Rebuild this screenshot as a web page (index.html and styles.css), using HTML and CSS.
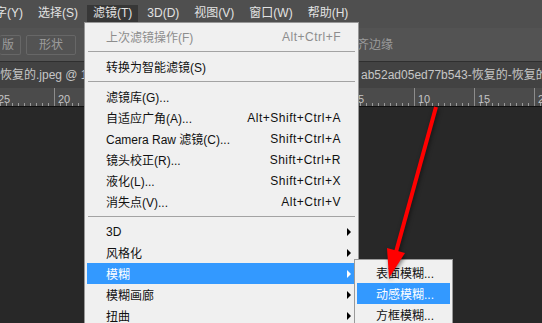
FILE: index.html
```html
<!DOCTYPE html>
<html lang="zh-CN">

<head>
  <meta charset="UTF-8" />
  <meta name="viewport" content="width=device-width, initial-scale=1.0" />
  <title>滤镜菜单</title>
  <link rel="stylesheet" href="styles.css">
</head>

<body>
  <div class="app">

    <div class="menubar">
      <span class="mb-item first">文字(Y)</span>
      <span class="mb-item">选择(S)</span>
      <span class="mb-item active">滤镜(T)</span>
      <span class="mb-item">3D(D)</span>
      <span class="mb-item">视图(V)</span>
      <span class="mb-item">窗口(W)</span>
      <span class="mb-item">帮助(H)</span>
    </div>

    <div class="options">
      <span class="opt-btn cut">版</span>
      <span class="opt-btn">形状</span>
      <span class="opt-text">对齐边缘</span>
    </div>

    <div class="tabs">
      <span class="tab first">恢复的.jpeg @ 100%(RGB/8#)</span>
      <span class="tab">ab52ad05ed77b543-恢复的-恢复的.jpeg @ 100%</span>
    </div>

    <div class="ruler">
      <span class="mark first">25</span>
      <span class="mark">20</span>
      <span class="mark">15</span>
      <span class="mark">10</span>
      <span class="mark">5</span>
      <span class="mark">0</span>
      <span class="mark">5</span>
      <span class="mark">10</span>
      <span class="mark">15</span>
      <span class="mark">2</span>
    </div>

    <div class="canvas"></div>

    <!-- 滤镜 dropdown -->
    <div class="menu">
      <div class="item disabled"><span>上次滤镜操作(F)</span><span class="key">Alt+Ctrl+F</span></div>
      <div class="sep"></div>
      <div class="item"><span>转换为智能滤镜(S)</span></div>
      <div class="sep"></div>
      <div class="item"><span>滤镜库(G)...</span></div>
      <div class="item"><span>自适应广角(A)...</span><span class="key">Alt+Shift+Ctrl+A</span></div>
      <div class="item"><span>Camera Raw 滤镜(C)...</span><span class="key">Shift+Ctrl+A</span></div>
      <div class="item"><span>镜头校正(R)...</span><span class="key">Shift+Ctrl+R</span></div>
      <div class="item"><span>液化(L)...</span><span class="key">Shift+Ctrl+X</span></div>
      <div class="item"><span>消失点(V)...</span><span class="key">Alt+Ctrl+V</span></div>
      <div class="sep"></div>
      <div class="item"><span>3D</span><span class="tri"></span></div>
      <div class="item"><span>风格化</span><span class="tri"></span></div>
      <div class="item hover"><span>模糊</span><span class="tri"></span></div>
      <div class="item"><span>模糊画廊</span><span class="tri"></span></div>
      <div class="item"><span>扭曲</span><span class="tri"></span></div>
    </div>

    <!-- 模糊 submenu -->
    <div class="submenu">
      <div class="item"><span>表面模糊...</span></div>
      <div class="item hover"><span>动感模糊...</span></div>
      <div class="item"><span>方框模糊...</span></div>
    </div>

    <svg class="arrow" width="542" height="323" viewBox="0 0 542 323">
      <line x1="436" y1="107" x2="396" y2="252" stroke="#ff0000" stroke-width="4" />
      <polygon points="389,278 387,248 405,253" fill="#ff0000" />
    </svg>

  </div>
</body>

</html>
```

FILE: styles.css
```css
* {
  box-sizing: border-box;
  margin: 0;
  padding: 0;
}

body {
  font-family: "Liberation Sans", "Noto Sans CJK SC", sans-serif;
  font-size: 12px;
  background: #282828;
  overflow: hidden;
}

.app {
  position: relative;
  width: 542px;
  height: 323px;
  display: flex;
  flex-direction: column;
  overflow: hidden;
}

/* top menu bar */
.menubar {
  height: 28px;
  background: #4f4f4f;
  display: flex;
  gap: 3px;
  padding-top: 5px;
  color: #e2e2e2;
  white-space: nowrap;
}

.mb-item {
  height: 17px;
  line-height: 17px;
  padding: 0 6px;
}

.mb-item.first {
  margin-left: -23px;
}

.mb-item.active {
  background: #373737;
  height: 23px;
}

/* options bar */
.options {
  height: 34px;
  background: #535353;
  border-bottom: 1px solid #2f2f2f;
  display: flex;
  align-items: flex-start;
  padding-top: 7px;
  gap: 5px;
  white-space: nowrap;
}

.opt-btn {
  height: 20px;
  line-height: 18px;
  padding: 0 12px;
  border: 1px solid #676767;
  border-radius: 2px;
  color: #9c9c9c;
}

.opt-btn.cut {
  border-left: none;
  padding: 0 6px 0 2px;
}

.opt-text {
  margin-left: 264px;
  line-height: 20px;
  color: #9a9a9a;
}

/* document tabs */
.tabs {
  height: 26px;
  background: #424242;
  display: flex;
  color: #c6c6c6;
  line-height: 27px;
  white-space: nowrap;
}

.tab {
  overflow: hidden;
}

.tab.first {
  flex: 0 0 361px;
}

/* ruler */
.ruler {
  height: 19px;
  background-color: #4b4b4b;
  background-image: repeating-linear-gradient(to right, #9a9a9a 0 1px, transparent 1px 6px);
  background-size: 100% 3px;
  background-position: 0 bottom;
  background-repeat: no-repeat;
  border-bottom: 1px solid #111;
  display: flex;
  white-space: nowrap;
}

.mark {
  flex: 0 0 60px;
  border-left: 1px solid #8c8c8c;
  padding: 6px 0 0 3px;
  font-size: 11px;
  line-height: 11px;
  color: #c4c4c4;
}

.mark.first {
  margin-left: -6px;
}

.canvas {
  flex: 1;
  background: #282828;
}

/* dropdown menus */
.menu {
  position: absolute;
  left: 84px;
  top: 22px;
  width: 275px;
  height: 320px;
  background: #f0f0f0;
  border: 1px solid #979797;
  padding: 3px 2px;
}

.item {
  height: 21px;
  display: flex;
  align-items: center;
  padding: 0 15px 0 19px;
  color: #111;
  white-space: nowrap;
}

.item .key {
  margin-left: auto;
  letter-spacing: 0.5px;
}

.item.disabled {
  color: #8d8d8d;
}

.item.hover {
  background: #3399ff;
  color: #fff;
}

.tri {
  margin-left: auto;
  margin-right: -10px;
  border-left: 4px solid #000;
  border-top: 4px solid transparent;
  border-bottom: 4px solid transparent;
}

.item.hover .tri {
  border-left-color: #fff;
}

.sep {
  height: 1px;
  margin: 4px 1px 4px 1px;
  background: #a3a3a3;
}

.submenu {
  position: absolute;
  left: 354px;
  top: 259px;
  width: 99px;
  height: 80px;
  background: #f0f0f0;
  border: 1px solid #9a9a9a;
  padding: 2px;
}

.arrow {
  position: absolute;
  left: 0;
  top: 0;
  pointer-events: none;
  filter: drop-shadow(1px 2px 2px rgba(0, 0, 0, 0.5));
}
```
